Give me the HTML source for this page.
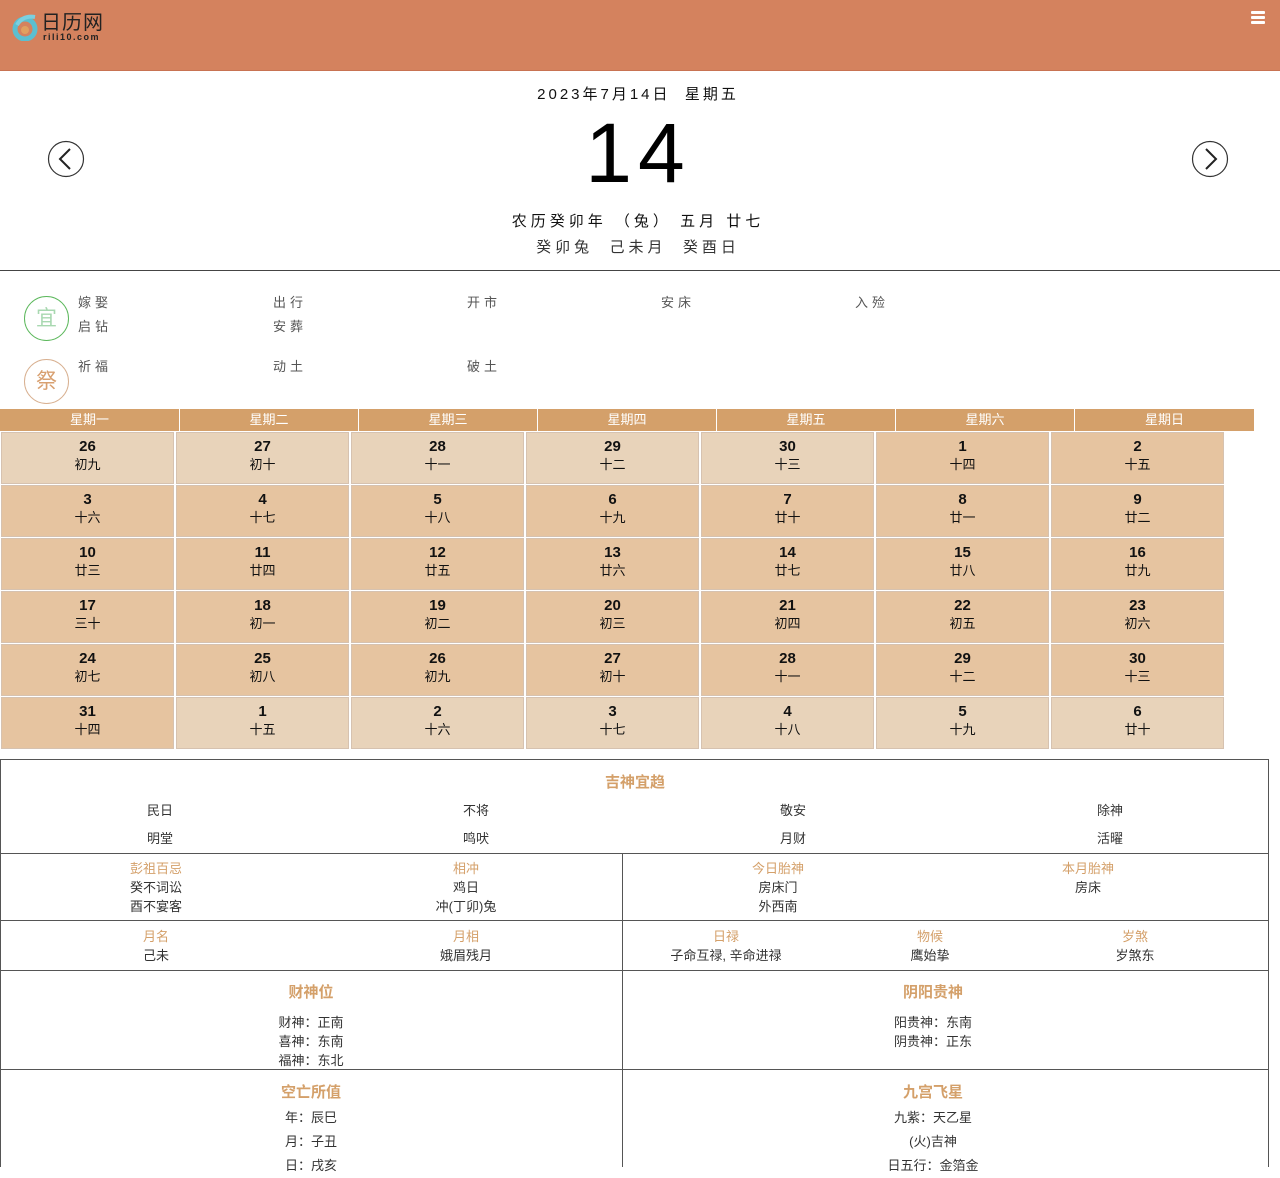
<!DOCTYPE html>
<html><head><meta charset="utf-8"><style>
*{margin:0;padding:0;box-sizing:border-box}
body{width:1280px;height:1167px;overflow:hidden;position:relative;background:#fff;font-family:"Liberation Sans","Noto Sans CJK SC",sans-serif;color:#222}
.a{position:absolute}
.c{position:absolute;transform:translateX(-50%);white-space:nowrap;text-align:center}
.hd{left:0;top:0;width:1280px;height:71px;background:#d4825e;border-bottom:1px solid #c87352}
.yi{position:absolute;font-size:13px;color:#555;letter-spacing:4px}
.wk{position:absolute;top:409px;height:22px;background:#d4a06a;color:#fff;font-size:13px;text-align:center;line-height:22px;border-right:1px solid #fff}
.cell{position:absolute;width:173px;height:52px;background:#e6c4a0;border:1px solid #d6c2b0;text-align:center;font-size:13px;color:#111}
.cell.l{background:#e8d3ba}
.cell b{display:block;font-size:15px;margin-top:5px;line-height:17px}
.cell span{display:block;line-height:19px}
.ln{position:absolute;background:#555}
.t{color:#d4a06a;font-weight:bold;font-size:15px}
.o{color:#d4a06a;font-size:13px}
.s{font-size:13px;color:#333}
</style></head><body>
<div class="a hd"></div>
<svg class="a" style="left:11px;top:13px" width="28" height="28" viewBox="0 0 28 28"><circle cx="14" cy="16" r="10" fill="none" stroke="#5bbfd0" stroke-width="5"/><path d="M6 12 Q12 2 24 4" fill="none" stroke="#7bd0e0" stroke-width="4"/><circle cx="14" cy="17" r="4" fill="#e0a060"/></svg>
<div class="a" style="left:41px;top:12px;font-size:20px;color:#222;letter-spacing:1px;line-height:22px">日历网</div>
<div class="a" style="left:43px;top:32px;font-size:9px;color:#222;letter-spacing:1.5px;font-weight:bold">rili10.com</div>
<div class="a" style="left:1251px;top:11px;width:14px;height:3px;background:#fff;border-radius:1px"></div>
<div class="a" style="left:1251px;top:16px;width:14px;height:3px;background:#fff;border-radius:1px"></div>
<div class="a" style="left:1251px;top:21px;width:14px;height:3px;background:#fff;border-radius:1px"></div>

<div class="c" style="left:638px;top:83px;font-size:15px;letter-spacing:3px;color:#111">2023年7月14日 &nbsp;星期五</div>
<div class="c" style="left:638px;top:107px;font-size:84px;line-height:92px;letter-spacing:6px;color:#000">14</div>
<div class="c" style="left:638px;top:210px;font-size:15px;letter-spacing:4px;color:#111">农历癸卯年 （兔） 五月 廿七</div>
<div class="c" style="left:638px;top:236px;font-size:15px;letter-spacing:4px;color:#333">癸卯兔 &nbsp;己未月 &nbsp;癸酉日</div>
<svg class="a" style="left:47px;top:140px" width="38" height="38"><circle cx="19" cy="19" r="17.5" fill="none" stroke="#333" stroke-width="1.2"/><path d="M23 9 L13 19 L23 29" fill="none" stroke="#222" stroke-width="2"/></svg>
<svg class="a" style="left:1191px;top:140px" width="38" height="38"><circle cx="19" cy="19" r="17.5" fill="none" stroke="#333" stroke-width="1.2"/><path d="M15 9 L25 19 L15 29" fill="none" stroke="#222" stroke-width="2"/></svg>
<div class="ln" style="left:0;top:270px;width:1280px;height:1px;background:#444"></div>

<div class="a" style="left:24px;top:296px;width:45px;height:45px;border:1px solid #5cb85c;border-radius:50%;text-align:center;line-height:43px;font-size:21px;color:#a8d8b0">宜</div>
<div class="a" style="left:24px;top:359px;width:45px;height:45px;border:1px solid #d8b090;border-radius:50%;text-align:center;line-height:43px;font-size:21px;color:#d8a070">祭</div>
<div class="yi" style="left:78px;top:292px">嫁娶</div>
<div class="yi" style="left:273px;top:292px">出行</div>
<div class="yi" style="left:467px;top:292px">开市</div>
<div class="yi" style="left:661px;top:292px">安床</div>
<div class="yi" style="left:855px;top:292px">入殓</div>
<div class="yi" style="left:78px;top:316px">启钻</div>
<div class="yi" style="left:273px;top:316px">安葬</div>
<div class="yi" style="left:78px;top:356px">祈福</div>
<div class="yi" style="left:273px;top:356px">动土</div>
<div class="yi" style="left:467px;top:356px">破土</div>

<div class="wk" style="left:0;width:180px">星期一</div>
<div class="wk" style="left:180px;width:179px">星期二</div>
<div class="wk" style="left:359px;width:179px">星期三</div>
<div class="wk" style="left:538px;width:179px">星期四</div>
<div class="wk" style="left:717px;width:179px">星期五</div>
<div class="wk" style="left:896px;width:179px">星期六</div>
<div class="wk" style="left:1075px;width:179px;border-right:0">星期日</div>

<div class="cell l" style="left:1px;top:432px"><b>26</b><span>初九</span></div>
<div class="cell l" style="left:176px;top:432px"><b>27</b><span>初十</span></div>
<div class="cell l" style="left:351px;top:432px"><b>28</b><span>十一</span></div>
<div class="cell l" style="left:526px;top:432px"><b>29</b><span>十二</span></div>
<div class="cell l" style="left:701px;top:432px"><b>30</b><span>十三</span></div>
<div class="cell" style="left:876px;top:432px"><b>1</b><span>十四</span></div>
<div class="cell" style="left:1051px;top:432px"><b>2</b><span>十五</span></div>
<div class="cell" style="left:1px;top:485px"><b>3</b><span>十六</span></div>
<div class="cell" style="left:176px;top:485px"><b>4</b><span>十七</span></div>
<div class="cell" style="left:351px;top:485px"><b>5</b><span>十八</span></div>
<div class="cell" style="left:526px;top:485px"><b>6</b><span>十九</span></div>
<div class="cell" style="left:701px;top:485px"><b>7</b><span>廿十</span></div>
<div class="cell" style="left:876px;top:485px"><b>8</b><span>廿一</span></div>
<div class="cell" style="left:1051px;top:485px"><b>9</b><span>廿二</span></div>
<div class="cell" style="left:1px;top:538px"><b>10</b><span>廿三</span></div>
<div class="cell" style="left:176px;top:538px"><b>11</b><span>廿四</span></div>
<div class="cell" style="left:351px;top:538px"><b>12</b><span>廿五</span></div>
<div class="cell" style="left:526px;top:538px"><b>13</b><span>廿六</span></div>
<div class="cell" style="left:701px;top:538px"><b>14</b><span>廿七</span></div>
<div class="cell" style="left:876px;top:538px"><b>15</b><span>廿八</span></div>
<div class="cell" style="left:1051px;top:538px"><b>16</b><span>廿九</span></div>
<div class="cell" style="left:1px;top:591px"><b>17</b><span>三十</span></div>
<div class="cell" style="left:176px;top:591px"><b>18</b><span>初一</span></div>
<div class="cell" style="left:351px;top:591px"><b>19</b><span>初二</span></div>
<div class="cell" style="left:526px;top:591px"><b>20</b><span>初三</span></div>
<div class="cell" style="left:701px;top:591px"><b>21</b><span>初四</span></div>
<div class="cell" style="left:876px;top:591px"><b>22</b><span>初五</span></div>
<div class="cell" style="left:1051px;top:591px"><b>23</b><span>初六</span></div>
<div class="cell" style="left:1px;top:644px"><b>24</b><span>初七</span></div>
<div class="cell" style="left:176px;top:644px"><b>25</b><span>初八</span></div>
<div class="cell" style="left:351px;top:644px"><b>26</b><span>初九</span></div>
<div class="cell" style="left:526px;top:644px"><b>27</b><span>初十</span></div>
<div class="cell" style="left:701px;top:644px"><b>28</b><span>十一</span></div>
<div class="cell" style="left:876px;top:644px"><b>29</b><span>十二</span></div>
<div class="cell" style="left:1051px;top:644px"><b>30</b><span>十三</span></div>
<div class="cell" style="left:1px;top:697px"><b>31</b><span>十四</span></div>
<div class="cell l" style="left:176px;top:697px"><b>1</b><span>十五</span></div>
<div class="cell l" style="left:351px;top:697px"><b>2</b><span>十六</span></div>
<div class="cell l" style="left:526px;top:697px"><b>3</b><span>十七</span></div>
<div class="cell l" style="left:701px;top:697px"><b>4</b><span>十八</span></div>
<div class="cell l" style="left:876px;top:697px"><b>5</b><span>十九</span></div>
<div class="cell l" style="left:1051px;top:697px"><b>6</b><span>廿十</span></div>

<div class="ln" style="left:0;top:759px;width:1269px;height:1px"></div>
<div class="ln" style="left:0;top:759px;width:1px;height:408px"></div>
<div class="ln" style="left:1268px;top:759px;width:1px;height:408px"></div>
<div class="ln" style="left:0;top:853px;width:1269px;height:1px"></div>
<div class="ln" style="left:0;top:920px;width:1269px;height:1px"></div>
<div class="ln" style="left:0;top:970px;width:1269px;height:1px"></div>
<div class="ln" style="left:0;top:1069px;width:1269px;height:1px"></div>
<div class="ln" style="left:622px;top:853px;width:1px;height:314px"></div>

<div class="c t" style="left:635px;top:771px">吉神宜趋</div>
<div class="c s" style="left:160px;top:800px">民日</div>
<div class="c s" style="left:476px;top:800px">不将</div>
<div class="c s" style="left:793px;top:800px">敬安</div>
<div class="c s" style="left:1110px;top:800px">除神</div>
<div class="c s" style="left:160px;top:828px">明堂</div>
<div class="c s" style="left:476px;top:828px">鸣吠</div>
<div class="c s" style="left:793px;top:828px">月财</div>
<div class="c s" style="left:1110px;top:828px">活曜</div>

<div class="c" style="left:156px;top:859px;line-height:19px"><div class="o">彭祖百忌</div><div class="s">癸不词讼</div><div class="s">酉不宴客</div></div>
<div class="c" style="left:466px;top:859px;line-height:19px"><div class="o">相冲</div><div class="s">鸡日</div><div class="s">冲(丁卯)兔</div></div>
<div class="c" style="left:778px;top:859px;line-height:19px"><div class="o">今日胎神</div><div class="s">房床门</div><div class="s">外西南</div></div>
<div class="c" style="left:1088px;top:859px;line-height:19px"><div class="o">本月胎神</div><div class="s">房床</div></div>

<div class="c" style="left:156px;top:927px;line-height:19px"><div class="o">月名</div><div class="s">己未</div></div>
<div class="c" style="left:466px;top:927px;line-height:19px"><div class="o">月相</div><div class="s">娥眉残月</div></div>
<div class="c" style="left:726px;top:927px;line-height:19px"><div class="o">日禄</div><div class="s">子命互禄, 辛命进禄</div></div>
<div class="c" style="left:930px;top:927px;line-height:19px"><div class="o">物候</div><div class="s">鹰始挚</div></div>
<div class="c" style="left:1135px;top:927px;line-height:19px"><div class="o">岁煞</div><div class="s">岁煞东</div></div>

<div class="c t" style="left:311px;top:981px">财神位</div>
<div class="c s" style="left:311px;top:1013px;line-height:19px">财神：正南<br>喜神：东南<br>福神：东北</div>
<div class="c t" style="left:933px;top:981px">阴阳贵神</div>
<div class="c s" style="left:933px;top:1013px;line-height:19px">阳贵神：东南<br>阴贵神：正东</div>

<div class="c t" style="left:311px;top:1081px">空亡所值</div>
<div class="c s" style="left:311px;top:1106px;line-height:24px">年：辰巳<br>月：子丑<br>日：戌亥</div>
<div class="c t" style="left:933px;top:1081px">九宫飞星</div>
<div class="c s" style="left:933px;top:1106px;line-height:24px">九紫：天乙星<br>(火)吉神<br>日五行：金箔金</div>
</body></html>
